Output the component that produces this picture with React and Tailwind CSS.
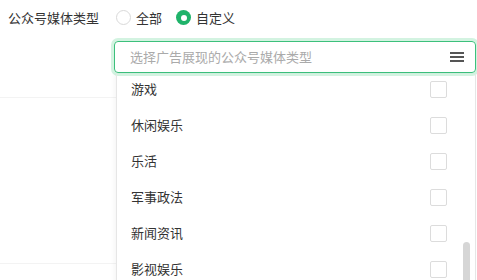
const items = ['游戏', '休闲娱乐', '乐活', '军事政法', '新闻资讯', '影视娱乐']

function App() {
  return (
    <div className="relative w-[477px] h-[280px] overflow-hidden bg-white text-[13px] text-[#333] font-['Noto_Sans_CJK_SC',sans-serif]">
      <div className="flex items-center h-[35px] pl-[8px]">
        <span className="w-[108px]">公众号媒体类型</span>
        <span className="w-[15px] h-[15px] rounded-full border border-[#d9d9d9]" />
        <span className="ml-[5px]">全部</span>
        <span className="ml-[14px] w-[15px] h-[15px] rounded-full bg-[#1fb36a] flex items-center justify-center">
          <span className="w-[6px] h-[6px] rounded-full bg-white" />
        </span>
        <span className="ml-[5px]">自定义</span>
      </div>

      <div className="absolute left-0 top-[97px] w-[116px] h-px bg-[#f3f3f3]" />
      <div className="absolute left-0 top-[263px] w-[116px] h-px bg-[#f3f3f3]" />

      <div className="ml-[114px] mt-[6px] w-[362px]">
        <div className="flex items-center justify-between h-[32px] pl-[15px] pr-[11px] rounded-[4px] border border-[#3cc07c] ring-[3px] ring-[#d3f3e1]">
          <span className="text-[#aaa]">选择广告展现的公众号媒体类型</span>
          <svg width="14" height="12" viewBox="0 0 14 12">
            <rect x="0" y="1" width="14" height="2" fill="#555" />
            <rect x="0" y="5" width="14" height="2" fill="#555" />
            <rect x="0" y="9" width="14" height="2" fill="#555" />
          </svg>
        </div>
        <div className="relative ml-[2px] mt-[1px] h-[220px] overflow-hidden border-l border-r border-[#e6e6e6] shadow-[-2px_0_4px_rgba(0,0,0,0.04)]">
          <div className="-mt-[3px]">
            {items.map((name) => (
              <div key={name} className="flex items-center justify-between h-[36px] pl-[14px] pr-[28px]">
                <span>{name}</span>
                <span className="w-[17px] h-[17px] rounded-[2px] border border-[#dcdcdc] bg-white" />
              </div>
            ))}
          </div>
          <div className="absolute right-[5px] top-[168px] w-[7px] h-[60px] rounded-full bg-[#d6d6d6]" />
        </div>
      </div>
    </div>
  )
}

export default App
